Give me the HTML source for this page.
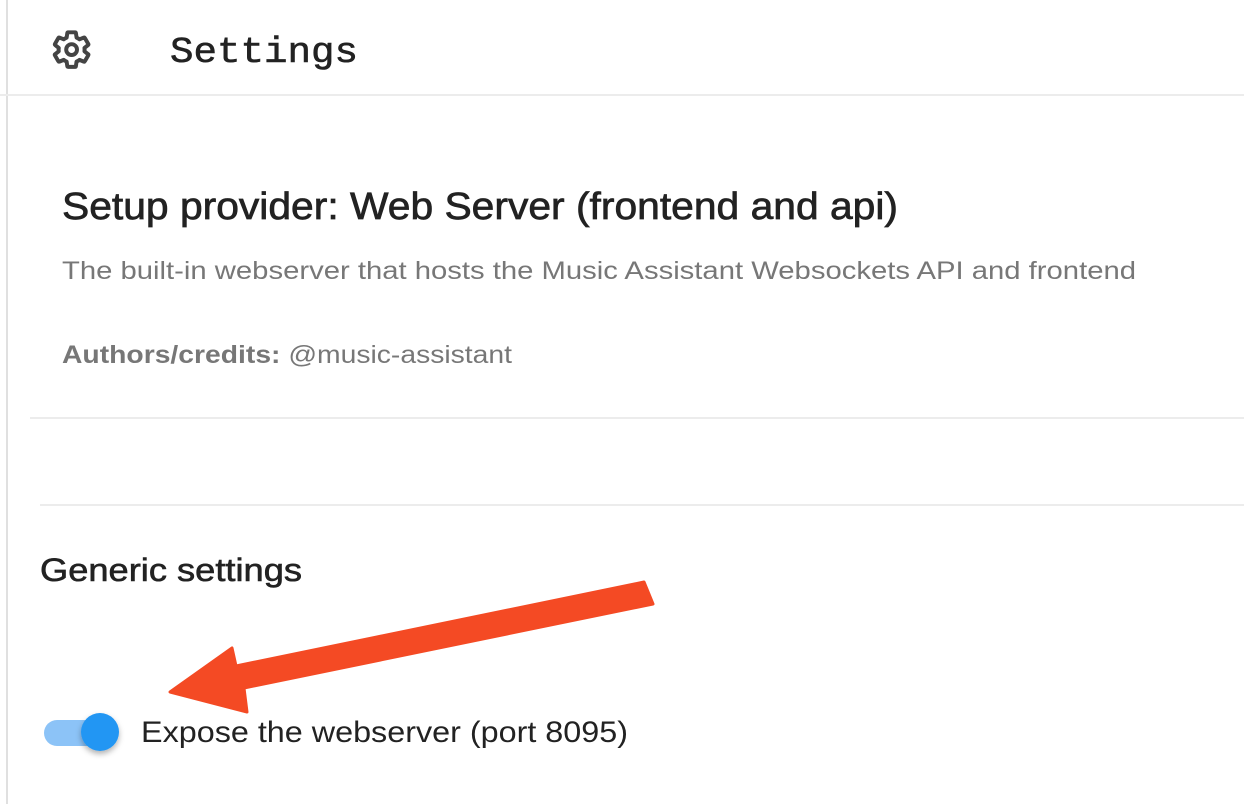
<!DOCTYPE html>
<html><head><meta charset="utf-8"><style>
html,body{margin:0;padding:0;background:#fff;width:1244px;height:804px;overflow:hidden}
svg{display:block}
</style></head><body>
<svg width="1244" height="804" viewBox="0 0 1244 804" xmlns="http://www.w3.org/2000/svg">
<rect width="1244" height="804" fill="#fff"/>
<rect x="6" y="0" width="2" height="804" fill="#e0e0e0"/>
<rect x="0" y="94" width="1244" height="2" fill="#ececec"/>
<rect x="30" y="417" width="1214" height="2" fill="#ececec"/>
<rect x="40" y="504" width="1204" height="2" fill="#ececec"/>
<!-- gear -->
<g transform="translate(50,28) scale(1.8)">
<path d="M19.14 12.94c.04-.3.06-.61.06-.94 0-.32-.02-.64-.07-.94l2.03-1.58a.49.49 0 0 0 .12-.61l-1.92-3.32a.49.49 0 0 0-.59-.22l-2.39.96c-.5-.38-1.03-.7-1.62-.94l-.36-2.54a.48.48 0 0 0-.48-.41h-3.84c-.24 0-.43.17-.47.41l-.36 2.54c-.59.24-1.13.57-1.62.94l-2.39-.96c-.22-.08-.47 0-.59.22L2.74 8.87c-.12.21-.08.47.12.61l2.03 1.58c-.05.3-.09.63-.09.94s.02.64.07.94l-2.03 1.58a.49.49 0 0 0-.12.61l1.92 3.320c.12.22.37.29.59.22l2.39-.96c.5.38 1.03.7 1.62.94l.36 2.54c.05.24.24.41.48.41h3.84c.24 0 .44-.17.47-.41l.36-2.54c.59-.24 1.13-.56 1.62-.94l2.39.96c.22.08.47 0 .59-.22l1.92-3.32c.12-.22.07-.47-.12-.61l-2.01-1.58z" fill="none" stroke="#444" stroke-width="2.2" stroke-linejoin="round"/>
<circle cx="12" cy="12" r="3" fill="none" stroke="#444" stroke-width="2.2"/>
</g>
<text x="170" y="62" font-family="Liberation Mono, monospace" font-size="36" fill="#222" stroke="#222" stroke-width="0.6" textLength="188" lengthAdjust="spacingAndGlyphs">Settings</text>
<text x="62" y="219" font-family="Liberation Sans, sans-serif" font-size="38" fill="#222" stroke="#222" stroke-width="0.7" textLength="836" lengthAdjust="spacingAndGlyphs">Setup provider: Web Server (frontend and api)</text>
<text x="62" y="279" font-family="Liberation Sans, sans-serif" font-size="25" fill="#777" textLength="1074" lengthAdjust="spacingAndGlyphs">The built-in webserver that hosts the Music Assistant Websockets API and frontend</text>
<text x="62" y="363" font-family="Liberation Sans, sans-serif" font-size="25" fill="#777" textLength="450" lengthAdjust="spacingAndGlyphs"><tspan font-weight="bold">Authors/credits:</tspan> @music-assistant</text>
<text x="40" y="581" font-family="Liberation Sans, sans-serif" font-size="32" fill="#222" stroke="#222" stroke-width="0.6" textLength="262" lengthAdjust="spacingAndGlyphs">Generic settings</text>
<!-- toggle -->
<defs><filter id="sh" x="-50%" y="-50%" width="200%" height="200%"><feDropShadow dx="0" dy="3" stdDeviation="3" flood-color="#000" flood-opacity="0.3"/></filter></defs>
<rect x="44" y="720" width="74" height="26" rx="13" fill="#8cc3f7"/>
<circle cx="100" cy="732" r="19" fill="#2196f3" filter="url(#sh)"/>
<text x="141" y="742" font-family="Liberation Sans, sans-serif" font-size="30" fill="#222" textLength="487" lengthAdjust="spacingAndGlyphs">Expose the webserver (port 8095)</text>
<!-- arrow -->
<polygon points="644,582 653,604 244,688 247,712 170,692 232,648 236,666" fill="#f44a24" stroke="#f44a24" stroke-width="3" stroke-linejoin="round"/>
</svg>
</body></html>
